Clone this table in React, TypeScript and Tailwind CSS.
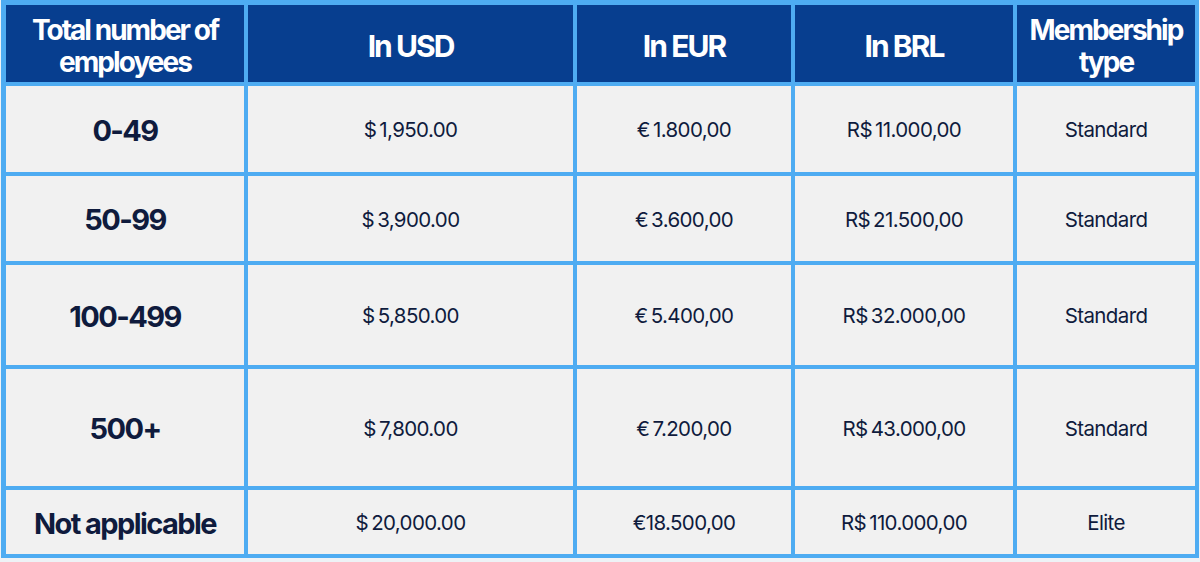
const headers = [
  ["Total number of", "employees"],
  ["In USD"],
  ["In EUR"],
  ["In BRL"],
  ["Membership", "type"],
];

const rows = [
  { size: "0-49", usd: "$\u20091,950.00", eur: "€\u20091.800,00", brl: "R$\u200911.000,00", type: "Standard", h: "h-[86px]" },
  { size: "50-99", usd: "$\u20093,900.00", eur: "€\u20093.600,00", brl: "R$\u200921.500,00", type: "Standard", h: "h-[85px]" },
  { size: "100-499", usd: "$\u20095,850.00", eur: "€\u20095.400,00", brl: "R$\u200932.000,00", type: "Standard", h: "h-[100px]" },
  { size: "500+", usd: "$\u20097,800.00", eur: "€\u20097.200,00", brl: "R$\u200943.000,00", type: "Standard", h: "h-[117px]" },
  { size: "Not applicable", usd: "$\u200920,000.00", eur: "€18.500,00", brl: "R$\u2009110.000,00", type: "Elite", h: "h-[64px]" },
];

const cols = "grid-cols-[238px_325px_214px_218px_178px]";

export default function App() {
  return (
    <div className="h-[562px] w-[1200px] bg-[#eef2f6] pl-[1px] font-['Inter',sans-serif] text-[#0f1b3d]">
      <div className="w-[1198px] bg-[#4eacf2] p-[5px] pr-[4px] pb-[4px]">
        <div className={`grid ${cols} gap-[4px]`}>
          {headers.map((lines, i) => (
            <div
              key={i}
              className="flex h-[77px] flex-col items-center justify-center bg-[#073e8f] pt-[5px] text-center text-[28px] font-bold leading-[32px] tracking-[-0.07em] text-white"
            >
              {lines.map((l) => (
                <span key={l} className={lines.length === 1 ? "text-[30px]" : ""}>
                  {l}
                </span>
              ))}
            </div>
          ))}
          {rows.map((r) => (
            <Row key={r.size} r={r} />
          ))}
        </div>
      </div>
    </div>
  );
}

function Row({ r }: { r: (typeof rows)[number] }) {
  const cell = `flex ${r.h} items-center justify-center bg-[#f1f1f1] pt-[3px] text-[20.5px] tracking-[-0.03em]`;
  return (
    <>
      <div className={`${cell} text-[29px] font-bold tracking-[-0.055em]`}>{r.size}</div>
      <div className={cell}>{r.usd}</div>
      <div className={cell}>{r.eur}</div>
      <div className={cell}>{r.brl}</div>
      <div className={cell}>{r.type}</div>
    </>
  );
}
